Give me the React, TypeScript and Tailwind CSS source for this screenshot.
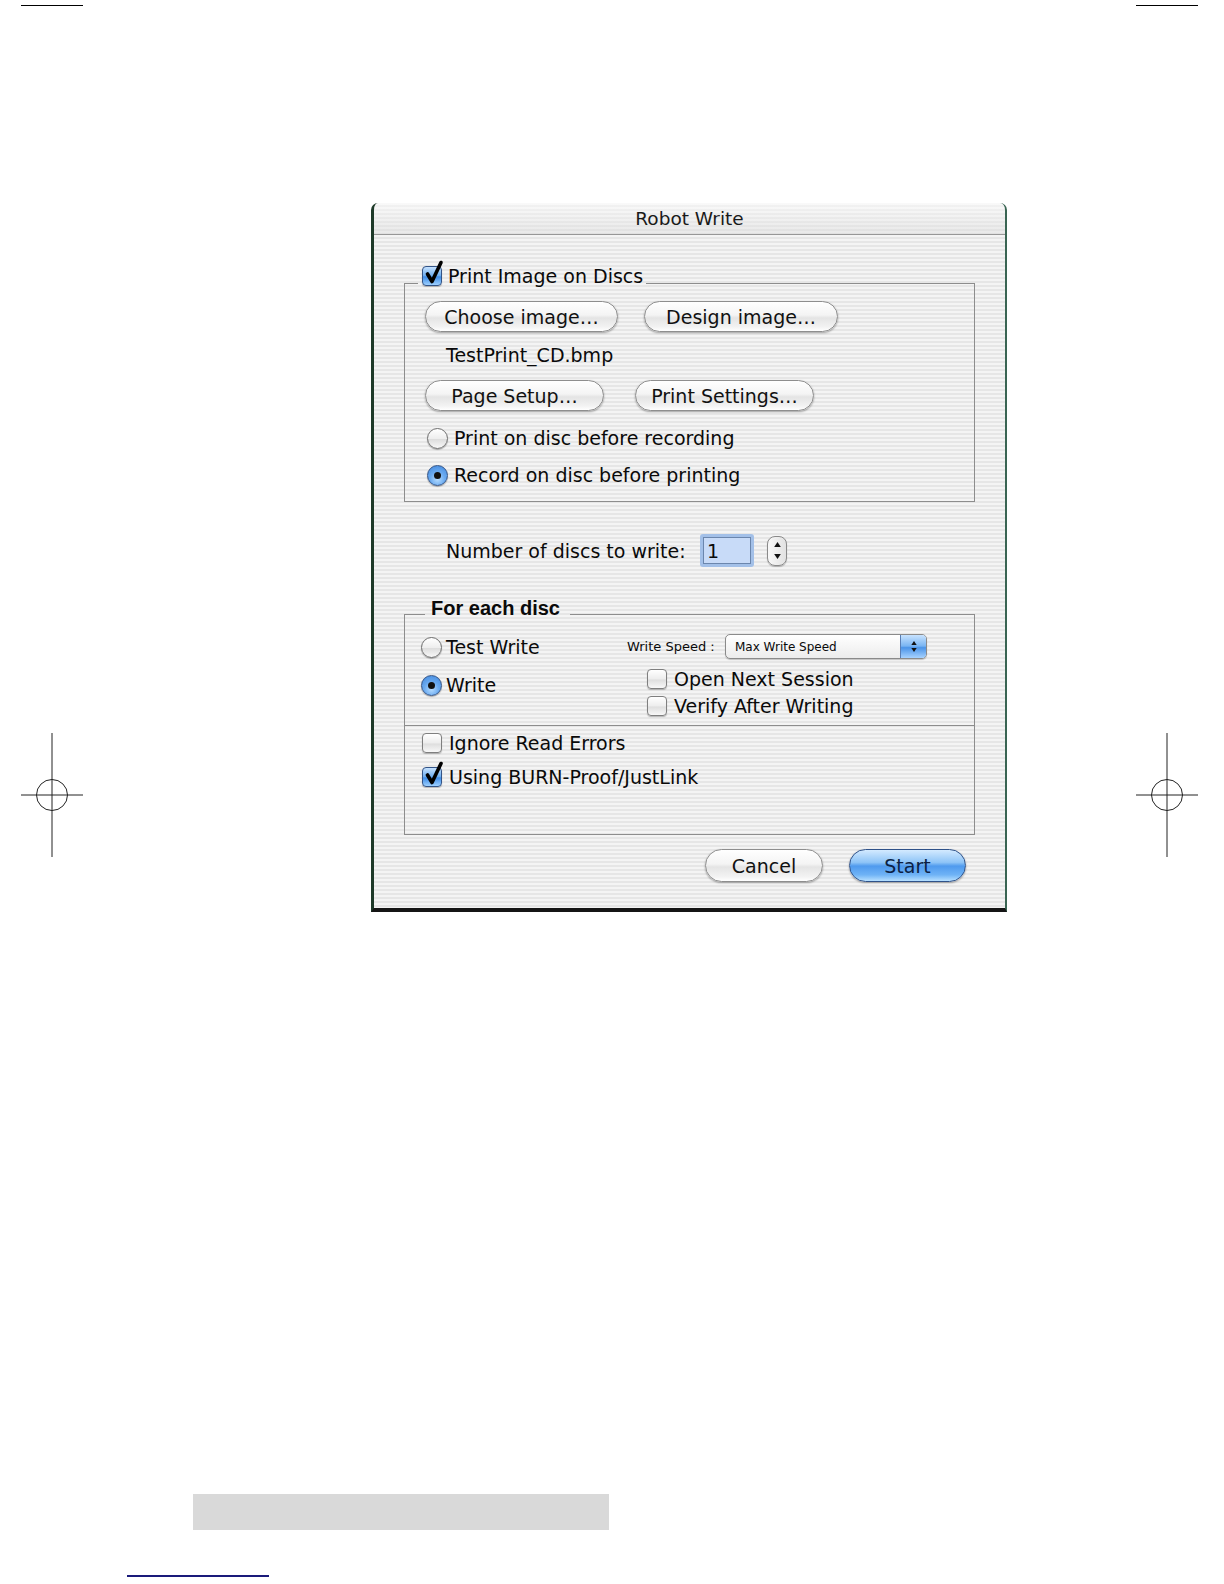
import clsx from 'clsx'
import type { ReactNode } from 'react'

const stripes =
  'bg-[repeating-linear-gradient(180deg,#f4f4f4_0px,#f4f4f4_2px,#e6e6e6_2px,#e6e6e6_4px)]'

function CheckBox({ checked }: { checked?: boolean }) {
  return (
    <span
      className={clsx(
        'relative inline-block h-[20px] w-[20px] shrink-0 rounded-[4px] border shadow-[0_1px_1px_rgba(0,0,0,0.25)]',
        checked
          ? 'border-[#335487] bg-[linear-gradient(180deg,#c6e2ff_0%,#6eaef0_48%,#3f8ce6_55%,#9dd0ff_100%)]'
          : 'border-[#7f7f7f] bg-[linear-gradient(180deg,#ffffff_0%,#ededed_50%,#dedede_55%,#f8f8f8_100%)]',
      )}
    >
      {checked && (
        <svg className="absolute left-[1px] top-[-7px]" width="20" height="25" viewBox="0 0 20 25">
          <path
            d="M3.5 14 L8 21.5 L17 2.5"
            fill="none"
            stroke="#000"
            strokeWidth="3.6"
            strokeLinecap="round"
            strokeLinejoin="round"
          />
        </svg>
      )}
    </span>
  )
}

function Radio({ checked }: { checked?: boolean }) {
  return (
    <span
      className={clsx(
        'flex h-[21px] w-[21px] shrink-0 items-center justify-center rounded-full border shadow-[0_1px_1px_rgba(0,0,0,0.3)]',
        checked
          ? 'border-[#335487] bg-[radial-gradient(circle_at_50%_70%,#b6dcff_0%,#6aaaf0_45%,#3f86dc_100%)]'
          : 'border-[#6f6f6f] bg-[linear-gradient(180deg,#ffffff_0%,#eeeeee_50%,#dddddd_55%,#f8f8f8_100%)]',
      )}
    >
      {checked && <span className="h-[7px] w-[7px] rounded-full bg-[#111]" />}
    </span>
  )
}

function AquaButton({
  children,
  className,
  primary,
}: {
  children: ReactNode
  className: string
  primary?: boolean
}) {
  return (
    <button
      className={clsx(
        'flex items-center justify-center rounded-full border text-[19px] shadow-[0_1px_2px_rgba(0,0,0,0.35)]',
        primary
          ? 'border-[#2f5289] bg-[linear-gradient(180deg,#d3eaff_0%,#8ec4f7_40%,#4f9aee_52%,#6fb3f6_80%,#b7e0ff_100%)] text-[#0c1f44]'
          : 'border-[#8e8e8e] bg-[linear-gradient(180deg,#ffffff_0%,#f4f4f4_45%,#e4e4e4_55%,#f2f2f2_85%,#ffffff_100%)] text-[#111]',
        className,
      )}
    >
      {children}
    </button>
  )
}

function Triangle({ up, size = 7 }: { up?: boolean; size?: number }) {
  return (
    <svg width={size} height={size - 2} viewBox="0 0 8 6">
      <path d={up ? 'M4 0 L8 6 L0 6 Z' : 'M0 0 L8 0 L4 6 Z'} fill="#111" />
    </svg>
  )
}

function Row({ children, className }: { children: ReactNode; className?: string }) {
  return <div className={clsx('flex h-[24px] items-center', className)}>{children}</div>
}

function RegMark({ className }: { className: string }) {
  return (
    <svg className={className} width="64" height="126" viewBox="0 0 64 126">
      <line x1="32" y1="0" x2="32" y2="124" stroke="#222" strokeWidth="1" />
      <line x1="1" y1="62" x2="63" y2="62" stroke="#222" strokeWidth="1" />
      <circle cx="32" cy="62" r="15.5" fill="none" stroke="#222" strokeWidth="1" />
    </svg>
  )
}

export default function App() {
  return (
    <div className="relative h-[1584px] w-[1224px] overflow-hidden bg-white font-['DejaVu_Sans',sans-serif] text-[#0a0a0a]">
      <div className="flex justify-between pl-[21px] pr-[26px] pt-[5px]">
        <div className="h-px w-[62px] bg-black" />
        <div className="h-px w-[62px] bg-black" />
      </div>

      <RegMark className="absolute left-[20px] top-[733px]" />
      <RegMark className="absolute left-[1135px] top-[733px]" />

      {/* dialog window */}
      <div
        className={clsx(
          'ml-[371px] mt-[197px] w-[636px] overflow-hidden rounded-t-[7px] border-b-4 border-l-[3px] border-r-2 border-b-[#151515] border-l-[#1e3a29] border-r-[#3a6553] text-[19px] leading-[24px]',
          stripes,
        )}
      >
        <div className="flex h-[32px] items-center justify-center border-b border-[#979797] bg-[linear-gradient(180deg,rgba(255,255,255,0.5),rgba(215,215,215,0.4))] text-[18.5px] text-[#1a1a1a]">
          Robot Write
        </div>

        <div className="pb-[26px] pl-[30px] pr-[30px]">
          <fieldset className="mt-[30px] border border-[#8d8d8d] pb-[14px]">
            <legend className="ml-[13px] h-[36px] pl-[4px] pr-[3px]">
              <div className="flex h-[22px] items-center gap-[6px]">
                <CheckBox checked />
                <span>Print Image on Discs</span>
              </div>
            </legend>

            <div className="flex gap-[26px] pl-[20px]">
              <AquaButton className="h-[31px] w-[193px]">Choose image…</AquaButton>
              <AquaButton className="h-[31px] w-[194px]">Design image…</AquaButton>
            </div>
            <div className="mt-[11px] pl-[41px]">TestPrint_CD.bmp</div>
            <div className="mt-[13px] flex gap-[31px] pl-[20px]">
              <AquaButton className="h-[31px] w-[179px]">Page Setup…</AquaButton>
              <AquaButton className="h-[31px] w-[179px]">Print Settings…</AquaButton>
            </div>
            <Row className="mt-[15px] gap-[6px] pl-[22px]">
              <Radio />
              <span>Print on disc before recording</span>
            </Row>
            <Row className="mt-[13px] gap-[6px] pl-[22px]">
              <Radio checked />
              <span>Record on disc before printing</span>
            </Row>
          </fieldset>

          <div className="mt-[32px] flex h-[33px] items-center pl-[42px]">
            <span className="w-[254px]">Number of discs to write:</span>
            <div className="h-[33px] w-[54px] rounded-[3px] bg-[#a3c0e8] p-[3px]">
              <div className="flex h-full w-full items-center border border-[#6b86ad] bg-[#c8dbf8] pl-[3px]">
                1
              </div>
            </div>
            <div className="ml-[13px] flex h-[30px] w-[20px] flex-col items-center justify-center gap-[7px] rounded-[8px] border border-[#8a8a8a] bg-[linear-gradient(90deg,#f8f8f8,#e2e2e2)] shadow-[0_1px_1px_rgba(0,0,0,0.25)]">
              <Triangle up />
              <Triangle />
            </div>
          </div>

          <fieldset className="mt-[30px] border border-[#8d8d8d] pb-[45px]">
            <legend className="ml-[20px] h-[34px] pl-[6px] pr-[10px]">
              <span className="block font-['Liberation_Sans',sans-serif] text-[20px] font-bold leading-[22px]">
                For each disc
              </span>
            </legend>

            <div className="flex items-start border-b border-[#8d8d8d] pb-[7px]">
              <div className="w-[222px] pl-[16px] pt-[4px]">
                <Row className="gap-[4px]">
                  <Radio />
                  <span>Test Write</span>
                </Row>
                <Row className="mt-[14px] gap-[4px]">
                  <Radio checked />
                  <span>Write</span>
                </Row>
              </div>
              <div className="pt-[3px]">
                <div className="flex h-[25px] items-center">
                  <span className="w-[98px] text-[13px]">Write Speed :</span>
                  <div className="flex h-[25px] w-[202px] items-center overflow-hidden rounded-[5px] border border-[#8a8a8a] bg-[linear-gradient(180deg,#ffffff,#ececec)] shadow-[0_1px_1px_rgba(0,0,0,0.2)]">
                    <span className="flex-1 pl-[9px] text-[12px]">Max Write Speed</span>
                    <span className="flex h-full w-[26px] flex-col items-center justify-center gap-[3px] border-l border-[#5a7fb5] bg-[linear-gradient(180deg,#c8e3ff_0%,#79b5f2_48%,#4b94e8_55%,#a6d2ff_100%)]">
                      <Triangle up size={6} />
                      <Triangle size={6} />
                    </span>
                  </div>
                </div>
                <Row className="mt-[8px] gap-[7px] pl-[20px]">
                  <CheckBox />
                  <span>Open Next Session</span>
                </Row>
                <Row className="mt-[3px] gap-[7px] pl-[20px]">
                  <CheckBox />
                  <span>Verify After Writing</span>
                </Row>
              </div>
            </div>

            <div className="pl-[17px]">
              <Row className="mt-[5px] gap-[7px]">
                <CheckBox />
                <span>Ignore Read Errors</span>
              </Row>
              <Row className="mt-[10px] gap-[7px]">
                <CheckBox checked />
                <span>Using BURN-Proof/JustLink</span>
              </Row>
            </div>
          </fieldset>

          <div className="mt-[14px] flex justify-end gap-[26px] pr-[9px]">
            <AquaButton className="h-[33px] w-[118px]">Cancel</AquaButton>
            <AquaButton primary className="h-[33px] w-[117px]">
              Start
            </AquaButton>
          </div>
        </div>
      </div>

      <div className="ml-[193px] mt-[582px] h-[36px] w-[416px] bg-[#d9d9d9]" />
      <div className="ml-[127px] mt-[45px] h-[2px] w-[142px] bg-[#1a1a7a]" />
    </div>
  )
}
